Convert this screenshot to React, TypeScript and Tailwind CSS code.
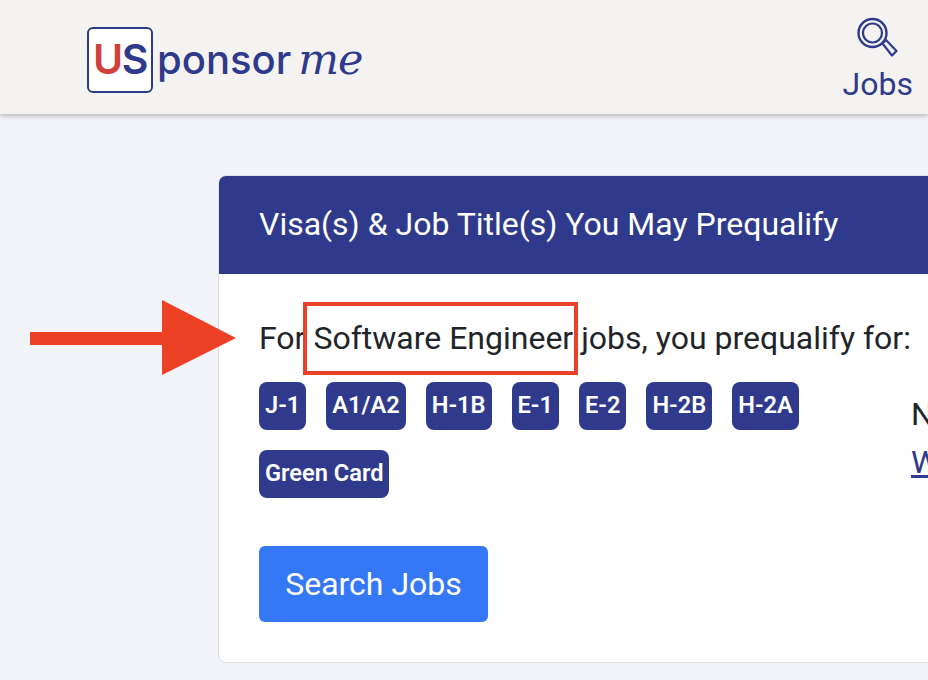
const visas = ["J-1", "A1/A2", "H-1B", "E-1", "E-2", "H-2B", "H-2A", "Green Card"];

function SearchIcon() {
  return (
    <svg width="42" height="42" viewBox="0 0 42 42" fill="none" stroke="#2f3a8c" aria-hidden="true">
      <circle cx="15.5" cy="16" r="14" strokeWidth="2.4" />
      <circle cx="15.5" cy="16" r="9.5" strokeWidth="2.2" />
      <path d="M25.5 26.5 L29 23 L39.5 34 L35 38.5 Z" strokeWidth="2.2" strokeLinejoin="round" fill="#f4f3f1" />
    </svg>
  );
}

function Logo() {
  return (
    <div className="flex items-center pt-[5px]">
      <div className="flex h-[66px] w-[66px] items-center justify-center rounded-[6px] border-2 border-[#2f3a8c] bg-white font-['Inter',sans-serif] text-[41px] font-semibold tracking-[-1.5px]">
        <span className="text-[#d2403c]">U</span>
        <span className="text-[#2f3a8c]">S</span>
      </div>
      <span className="ml-[4px] font-['Inter',sans-serif] text-[40px] font-medium leading-none text-[#2f3a8c]">
        ponsor
      </span>
      <span className="ml-[7px] font-['DejaVu_Serif',serif] text-[43px] italic leading-none tracking-[-1px] text-[#2f3a8c]">
        me
      </span>
    </div>
  );
}

export default function App() {
  return (
    <div className="relative h-[680px] w-[928px] overflow-hidden bg-[#f2f4f9] font-['Roboto',sans-serif]">
      <header className="flex h-[114px] items-center justify-between bg-[#f4f3f1] pl-[87px] pr-[15px] shadow-[0_2px_5px_rgba(0,0,0,0.25)]">
        <Logo />
        <div className="flex flex-col items-center pt-[6px] text-[#2f3a8c]">
          <SearchIcon />
          <span className="mt-[6px] text-[32px] leading-[38px]">Jobs</span>
        </div>
      </header>

      <section className="ml-[218px] mt-[61px] h-[488px] w-[800px] overflow-hidden rounded-[8px] border border-[#dfe0e3] bg-white">
        <div className="flex h-[98px] items-center bg-[#2f3a8c] pb-[2px] pl-10 text-[32px] text-white">
          Visa(s) &amp; Job Title(s) You May Prequalify
        </div>
        <div className="flex pl-10">
          <div className="w-[652px] shrink-0">
            <p className="mt-[44px] text-[32px] leading-[40px] text-[#212529]">
              For Software Engineer jobs, you prequalify for:
            </p>
            <div className="mt-[24px] flex w-[560px] flex-wrap gap-x-5 gap-y-5">
              {visas.map((v) => (
                <span
                  key={v}
                  className="flex h-[48px] items-center rounded-[8px] bg-[#2f3a8c] px-[6px] text-[23.6px] font-semibold text-white"
                >
                  {v}
                </span>
              ))}
            </div>
            <button className="mt-[48px] h-[76px] w-[229px] rounded-[6px] bg-[#3478f6] text-[32px] text-white">
              Search Jobs
            </button>
          </div>
          <div className="mt-[116px] text-[32px] leading-[48px] text-[#212529]">
            <p>N</p>
            <a className="text-[#2f3a8c] underline">W</a>
          </div>
        </div>
      </section>

      <div className="absolute left-[303px] top-[302px] h-[73px] w-[275px] border-[4px] border-[#e8432a]" />
      <svg className="absolute left-[30px] top-[300px]" width="208" height="76" viewBox="0 0 208 76" aria-hidden="true">
        <path d="M0 32 H132 V0 L206 38 L132 75 V45 H0 Z" fill="#ec4124" />
      </svg>
    </div>
  );
}
